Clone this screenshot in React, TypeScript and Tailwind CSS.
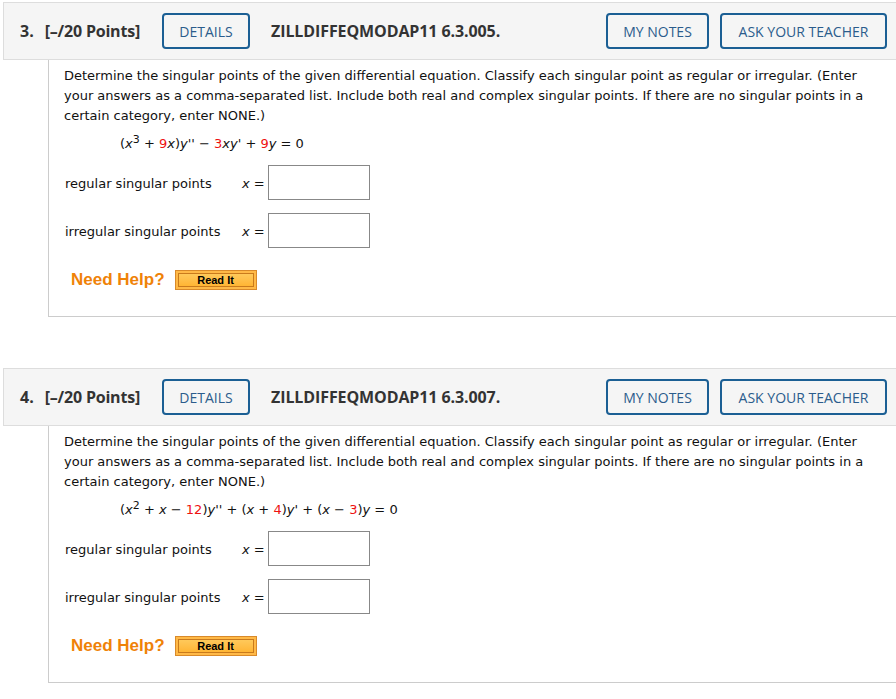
import React from "react";

type Part = { t: string; red?: boolean; it?: boolean; sup?: boolean };

const Q3_EQ: Part[] = [
  { t: "(" },
  { t: "x", it: true },
  { t: "3", sup: true },
  { t: " + " },
  { t: "9", red: true },
  { t: "x", it: true },
  { t: ")" },
  { t: "y''", it: true },
  { t: " − " },
  { t: "3", red: true },
  { t: "xy'", it: true },
  { t: " + " },
  { t: "9", red: true },
  { t: "y", it: true },
  { t: " = 0" },
];

const Q4_EQ: Part[] = [
  { t: "(" },
  { t: "x", it: true },
  { t: "2", sup: true },
  { t: " + " },
  { t: "x", it: true },
  { t: " − " },
  { t: "12", red: true },
  { t: ")" },
  { t: "y''", it: true },
  { t: " + (" },
  { t: "x", it: true },
  { t: " + " },
  { t: "4", red: true },
  { t: ")" },
  { t: "y'", it: true },
  { t: " + (" },
  { t: "x", it: true },
  { t: " − " },
  { t: "3", red: true },
  { t: ")" },
  { t: "y", it: true },
  { t: " = 0" },
];

function Equation({ parts }: { parts: Part[] }) {
  return (
    <div className="mt-[8px] ml-[56px] whitespace-pre h-[20px] leading-[20px]">
      {parts.map((p, i) => {
        const cls = `${p.red ? "text-[#ee1111]" : ""} ${p.it ? "italic" : ""}`;
        if (p.sup)
          return (
            <span key={i} className="text-[11px] leading-none relative -top-[5px]">
              {p.t}
            </span>
          );
        return (
          <span key={i} className={cls}>
            {p.t}
          </span>
        );
      })}
    </div>
  );
}

function OutlineButton({ label, width }: { label: string; width: string }) {
  return (
    <button
      className={`${width} h-[36px] border-2 border-[#1b5f94] rounded-[4px] text-[14px] text-[#2b5c8c] bg-[#f5f5f5] flex items-center justify-center`}
    >
      {label}
    </button>
  );
}

function AnswerRow({ label }: { label: string }) {
  return (
    <div className="flex items-center">
      <span className="w-[178px] pl-[1px] pt-[3px]">{label}</span>
      <span className="w-[26px] italic pt-[3px]">
        x <span className="not-italic">=</span>
      </span>
      <input
        type="text"
        className="w-[102px] h-[35px] border border-[#888] bg-white outline-none"
      />
    </div>
  );
}

function Question({ num, code, eq }: { num: number; code: string; eq: Part[] }) {
  return (
    <div>
      <div className="ml-[3px] h-[58px] border border-r-0 border-[#dddddd] bg-[#f5f5f5] flex items-center pl-[16px] pr-[9px] font-['Open_Sans',sans-serif] text-[#333]">
        <span className="text-[16px] font-bold">{num}.</span>
        <span className="ml-[11px] text-[16px] font-bold tracking-[-0.2px]">[–/20 Points]</span>
        <div className="ml-[22px]">
          <OutlineButton label="DETAILS" width="w-[88px]" />
        </div>
        <span className="ml-[21px] text-[16px] font-bold tracking-[-0.1px]">{code}</span>
        <div className="ml-auto flex gap-[11px]">
          <OutlineButton label="MY NOTES" width="w-[103px]" />
          <OutlineButton label="ASK YOUR TEACHER" width="w-[167px]" />
        </div>
      </div>
      <div className="ml-[48px] border-l border-b border-[#cccccc] pl-[15px] pt-[6px] pb-[26px] font-['DejaVu_Sans',Verdana,sans-serif] text-[13px] text-[#111] leading-[20px]">
        <p>
          Determine the singular points of the given differential equation. Classify each singular point as regular or irregular. (Enter
          <br />
          your answers as a comma-separated list. Include both real and complex singular points. If there are no singular points in a
          <br />
          certain category, enter NONE.)
        </p>
        <Equation parts={eq} />
        <div className="mt-[11px] flex flex-col gap-[13px]">
          <AnswerRow label="regular singular points" />
          <AnswerRow label="irregular singular points" />
        </div>
        <div className="mt-[22px] flex items-center ml-[7px]">
          <span className="font-['Liberation_Sans',Arial,sans-serif] font-bold text-[17px] text-[#ef8208]">
            Need Help?
          </span>
          <button className="ml-[10px] w-[82px] h-[20px] border border-[#d98a2a] bg-[#ffb947] p-[2px] flex">
            <span className="flex-1 border border-[#c97a1c] bg-gradient-to-b from-[#ffc95a] to-[#ffb533] flex items-center justify-center font-['Liberation_Sans',Arial,sans-serif] font-bold text-[11px] text-black leading-none">
              Read It
            </span>
          </button>
        </div>
      </div>
    </div>
  );
}

export default function App() {
  return (
    <div className="w-[896px] h-[699px] bg-white pt-[2px] overflow-hidden">
      <Question num={3} code="ZILLDIFFEQMODAP11 6.3.005." eq={Q3_EQ} />
      <div className="h-[51px]" />
      <Question num={4} code="ZILLDIFFEQMODAP11 6.3.007." eq={Q4_EQ} />
    </div>
  );
}
